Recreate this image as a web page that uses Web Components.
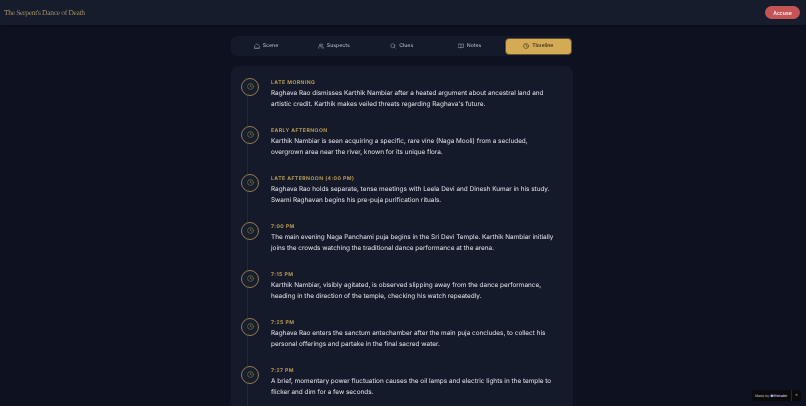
<!DOCTYPE html>
<html>
<head>
<meta charset="utf-8">
<title>The Serpent's Dance of Death</title>
<style>
  html, body { margin: 0; height: 100%; overflow: hidden; background: #0d1120; }
  body { font-family: "Inter", "Liberation Sans", sans-serif; color: #e2e5ea; text-rendering: geometricPrecision; }
</style>
</head>
<body>
<game-app></game-app>

<script>
const ICONS = {
  scene: '<path d="M3 10.5 12 3l9 7.5V21H3z"/><path d="M3 21h18"/>',
  suspects: '<circle cx="9" cy="8" r="4"/><path d="M2 21v-2a5 5 0 0 1 5-5h4a5 5 0 0 1 5 5v2"/><path d="M16 3.2a4 4 0 0 1 0 7.6"/><path d="M22 21v-2a5 5 0 0 0-4-4.9"/>',
  clues: '<circle cx="11" cy="11" r="8"/><path d="m21 21-4.3-4.3"/>',
  notes: '<path d="M2 4h7a3 3 0 0 1 3 3 3 3 0 0 1 3-3h7v14h-8a2 2 0 0 0-2 2 2 2 0 0 0-2-2H2z"/><path d="M12 7v13"/>',
  clock: '<circle cx="12" cy="12" r="10"/><path d="M12 6v6l4 2"/>'
};

function icon(name, size) {
  return `<svg width="${size}" height="${size}" viewBox="0 0 24 24" fill="none" stroke="currentColor" stroke-width="2" stroke-linecap="round" stroke-linejoin="round">${ICONS[name]}</svg>`;
}

class GameHeader extends HTMLElement {
  constructor() {
    super();
    this.attachShadow({ mode: 'open' });
    this.shadowRoot.innerHTML = `
      <style>
        :host {
          display: flex;
          align-items: center;
          justify-content: space-between;
          height: 25px;
          padding: 0 6px 0 4px;
          background: #161c2c;
          box-shadow: 0 1px 3px rgba(0, 0, 0, 0.25);
          will-change: transform;
        }
        h1 {
          margin: 0;
          font: 400 7.5px "Liberation Serif", serif;
          letter-spacing: -0.32px;
          color: #a3905e;
        }
        button {
          height: 12.5px;
          width: 35px;
          padding: 0;
          border: 0;
          border-radius: 7px;
          background: #c75454;
          color: #f6e9e6;
          font: 700 5px "Inter", sans-serif;
        }
      </style>
      <h1>The Serpent's Dance of Death</h1>
      <button>Accuse</button>
    `;
  }
}

class TabBar extends HTMLElement {
  constructor() {
    super();
    this.attachShadow({ mode: 'open' });
    this.shadowRoot.innerHTML = `
      <style>
        :host {
          display: flex;
          gap: 2px;
          align-items: center;
          height: 20px;
          padding: 0 1px 0 2px;
          border-radius: 6px;
          background: #151a2a;
        }
      </style>
      <slot></slot>
    `;
  }
}

class TabItem extends HTMLElement {
  constructor() {
    super();
    this.attachShadow({ mode: 'open' });
    this.shadowRoot.innerHTML = `
      <style>
        :host {
          flex: 1;
          display: flex;
          align-items: center;
          justify-content: center;
          gap: 3px;
          color: #a7adb9;
          font-size: 5.2px;
          font-weight: 500;
          border-radius: 4px;
        }
        :host([active]) {
          flex: 0 0 65.5px;
          height: 15px;
          background: #d4aa55;
          border: 1.5px solid #5f5030;
          color: #2a2416;
          box-shadow: 0 0 0 0.5px #0d1120;
        }
        svg { display: block; }
      </style>
      <span id="i"></span>
      <slot></slot>
    `;
  }
  connectedCallback() {
    this.shadowRoot.querySelector('#i').innerHTML = icon(this.getAttribute('icon'), 6);
    this.shadowRoot.querySelector('#i').style.display = 'contents';
  }
}

class TimelineCard extends HTMLElement {
  constructor() {
    super();
    this.attachShadow({ mode: 'open' });
    this.shadowRoot.innerHTML = `
      <style>
        :host {
          display: flex;
          flex-direction: column;
          gap: 15px;
          padding: 11.5px 18px 16px 10px;
          border-radius: 8px;
          background: #151a2a;
        }
      </style>
      <slot></slot>
    `;
  }
}

class TimelineEvent extends HTMLElement {
  constructor() {
    super();
    this.attachShadow({ mode: 'open' });
    this.shadowRoot.innerHTML = `
      <style>
        :host {
          position: relative;
          display: flex;
          gap: 12px;
          min-height: 33px;
        }
        .dot {
          flex: none;
          box-sizing: border-box;
          width: 18px;
          height: 18px;
          display: flex;
          align-items: center;
          justify-content: center;
          border: 1px solid #8f7b4f;
          border-radius: 50%;
          color: #8f7b4f;
          background: #191e2d;
        }
        .line {
          position: absolute;
          left: 5.5px;
          top: 18px;
          bottom: -15px;
          width: 1px;
          background: #232938;
        }
        .time {
          font-size: 5.1px;
          line-height: 7px;
          font-weight: 700;
          letter-spacing: 0.45px;
          color: #b89a55;
          text-transform: uppercase;
          margin: 2px 0 1.5px;
        }
        .text {
          font-size: 6.42px;
          line-height: 10.5px;
          color: #dfe2e8;
        }
      </style>
      <div class="line"></div>
      <div class="dot">${icon('clock', 7)}</div>
      <div>
        <div class="time"></div>
        <div class="text"><slot></slot></div>
      </div>
    `;
  }
  connectedCallback() {
    this.shadowRoot.querySelector('.time').textContent = this.getAttribute('time');
  }
}

class MadeByBadge extends HTMLElement {
  constructor() {
    super();
    this.attachShadow({ mode: 'open' });
    this.shadowRoot.innerHTML = `
      <style>
        :host {
          position: fixed;
          right: 5px;
          bottom: 5px;
          display: flex;
          align-items: center;
          height: 11px;
          background: #0a0a0d;
          border-radius: 2px;
          color: #bfc1c6;
          font-size: 3.5px;
        }
        span { padding: 0 4px 0 3px; }
        b { color: #b6b4e6; font-weight: 600; }
        i {
          font-style: normal;
          padding: 0 3px;
          line-height: 11px;
          border-left: 0.5px solid #2a2a2e;
        }
      </style>
      <span>Made by <b>&#9679;Rishabh</b></span>
      <i>&#10005;</i>
    `;
  }
}

class GameApp extends HTMLElement {
  constructor() {
    super();
    this.attachShadow({ mode: 'open' });
    this.shadowRoot.innerHTML = `
      <style>
        :host { display: block; }
        main {
          display: flex;
          flex-direction: column;
          gap: 10px;
          margin: 11px 233px 0 231px;
          will-change: transform;
        }
      </style>
      <game-header></game-header>
      <main><slot></slot></main>
      <made-by-badge></made-by-badge>
    `;
    this.innerHTML = `
      <tab-bar>
        <tab-item icon="scene">Scene</tab-item>
        <tab-item icon="suspects">Suspects</tab-item>
        <tab-item icon="clues">Clues</tab-item>
        <tab-item icon="notes">Notes</tab-item>
        <tab-item icon="clock" active>Timeline</tab-item>
      </tab-bar>
      <timeline-card>
        <timeline-event time="Late Morning">Raghava Rao dismisses Karthik Nambiar after a heated argument about ancestral land and artistic credit. Karthik makes veiled threats regarding Raghava's future.</timeline-event>
        <timeline-event time="Early Afternoon">Karthik Nambiar is seen acquiring a specific, rare vine (Naga Mooli) from a secluded, overgrown area near the river, known for its unique flora.</timeline-event>
        <timeline-event time="Late Afternoon (4:00 PM)">Raghava Rao holds separate, tense meetings with Leela Devi and Dinesh Kumar in his study. Swami Raghavan begins his pre-puja purification rituals.</timeline-event>
        <timeline-event time="7:00 PM">The main evening Naga Panchami puja begins in the Sri Devi Temple. Karthik Nambiar initially joins the crowds watching the traditional dance performance at the arena.</timeline-event>
        <timeline-event time="7:15 PM">Karthik Nambiar, visibly agitated, is observed slipping away from the dance performance, heading in the direction of the temple, checking his watch repeatedly.</timeline-event>
        <timeline-event time="7:25 PM">Raghava Rao enters the sanctum antechamber after the main puja concludes, to collect his personal offerings and partake in the final sacred water.</timeline-event>
        <timeline-event time="7:27 PM">A brief, momentary power fluctuation causes the oil lamps and electric lights in the temple to flicker and dim for a few seconds.</timeline-event>
      </timeline-card>
    `;
  }
}

customElements.define('game-header', GameHeader);
customElements.define('tab-bar', TabBar);
customElements.define('tab-item', TabItem);
customElements.define('timeline-card', TimelineCard);
customElements.define('timeline-event', TimelineEvent);
customElements.define('made-by-badge', MadeByBadge);
customElements.define('game-app', GameApp);
</script>
</body>
</html>
